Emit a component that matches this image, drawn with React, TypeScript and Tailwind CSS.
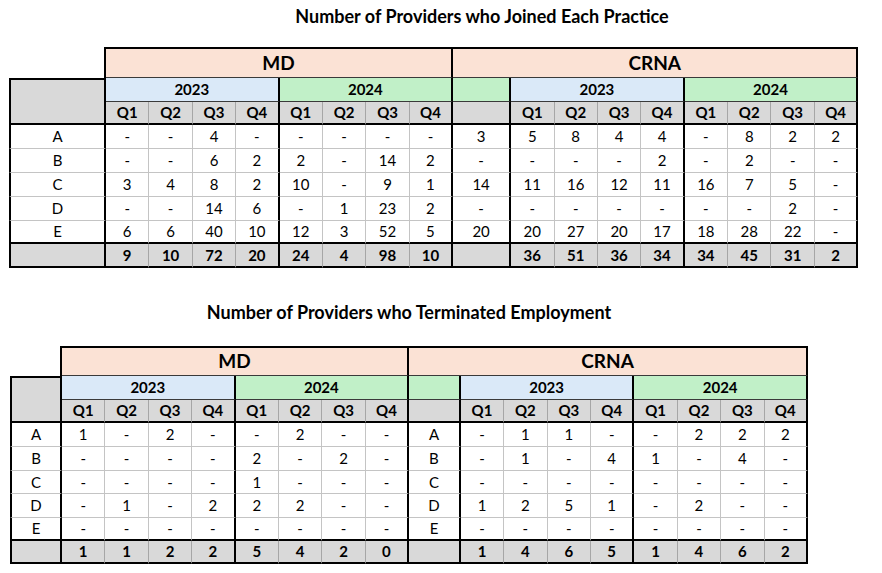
import React from "react";

type Row = { label: string; md: string[]; extra: string; crna: string[] };

const t1Rows: Row[] = [
  { label: "A", md: ["-", "-", "4", "-", "-", "-", "-", "-"], extra: "3", crna: ["5", "8", "4", "4", "-", "8", "2", "2"] },
  { label: "B", md: ["-", "-", "6", "2", "2", "-", "14", "2"], extra: "-", crna: ["-", "-", "-", "2", "-", "2", "-", "-"] },
  { label: "C", md: ["3", "4", "8", "2", "10", "-", "9", "1"], extra: "14", crna: ["11", "16", "12", "11", "16", "7", "5", "-"] },
  { label: "D", md: ["-", "-", "14", "6", "-", "1", "23", "2"], extra: "-", crna: ["-", "-", "-", "-", "-", "-", "2", "-"] },
  { label: "E", md: ["6", "6", "40", "10", "12", "3", "52", "5"], extra: "20", crna: ["20", "27", "20", "17", "18", "28", "22", "-"] },
];
const t1Tot = { md: ["9", "10", "72", "20", "24", "4", "98", "10"], crna: ["36", "51", "36", "34", "34", "45", "31", "2"] };

const d = "-";
const t2Rows: Row[] = [
  { label: "A", md: ["1", d, "2", d, d, "2", d, d], extra: "A", crna: [d, "1", "1", d, d, "2", "2", "2"] },
  { label: "B", md: [d, d, d, d, "2", d, "2", d], extra: "B", crna: [d, "1", d, "4", "1", d, "4", d] },
  { label: "C", md: [d, d, d, d, "1", d, d, d], extra: "C", crna: [d, d, d, d, d, d, d, d] },
  { label: "D", md: [d, "1", d, "2", "2", "2", d, d], extra: "D", crna: ["1", "2", "5", "1", d, "2", d, d] },
  { label: "E", md: [d, d, d, d, d, d, d, d], extra: "E", crna: [d, d, d, d, d, d, d, d] },
];
const t2Tot = { md: ["1", "1", "2", "2", "5", "4", "2", "0"], crna: ["1", "4", "6", "5", "1", "4", "6", "2"] };

const THICK = new Set([0, 4, 8, 9, 13, 17]);

function rb(c: number, header = false) {
  if (THICK.has(c)) return "border-r-2 border-r-black";
  return header ? "border-r border-r-[#a6a6a6]" : "border-r border-r-[#c4c4c4]";
}

const Q = ["Q1", "Q2", "Q3", "Q4", "Q1", "Q2", "Q3", "Q4"];

function Table({
  rows,
  tot,
  colsClass,
  rowsClass,
}: {
  rows: Row[];
  tot: { md: string[]; crna: string[] };
  colsClass: string;
  rowsClass: string;
}) {
  const cells: React.ReactNode[] = [];
  let k = 0;
  const base = "flex items-center justify-center text-black";
  // Row 1
  cells.push(<div key={k++} className="border-r-2 border-r-black" />);
  cells.push(
    <div key={k++} className={`${base} col-span-8 bg-[#fbe2d5] border-t-2 border-t-black border-r-2 border-r-black border-b border-b-[#3a3a3a] text-[19px] font-bold`}>
      MD
    </div>
  );
  cells.push(
    <div key={k++} className={`${base} col-span-9 bg-[#fbe2d5] border-t-2 border-t-black border-r-2 border-r-black border-b border-b-[#3a3a3a] text-[19px] font-bold`}>
      CRNA
    </div>
  );
  // Row 2
  cells.push(
    <div key={k++} className="row-span-2 bg-[#d9d9d9] border-l-2 border-l-black border-t-2 border-t-black border-r-2 border-r-black border-b-2 border-b-black" />
  );
  const yr = "text-[15px] font-bold border-b border-b-[#3a3a3a]";
  cells.push(<div key={k++} className={`${base} ${yr} col-span-4 bg-[#dae9f8] border-r-2 border-r-black`}>2023</div>);
  cells.push(<div key={k++} className={`${base} ${yr} col-span-4 bg-[#c1f0c8] border-r-2 border-r-black`}>2024</div>);
  cells.push(<div key={k++} className={`${base} ${yr} bg-[#c1f0c8] border-r-2 border-r-black`} />);
  cells.push(<div key={k++} className={`${base} ${yr} col-span-4 bg-[#dae9f8] border-r-2 border-r-black`}>2023</div>);
  cells.push(<div key={k++} className={`${base} ${yr} col-span-4 bg-[#c1f0c8] border-r-2 border-r-black`}>2024</div>);
  // Row 3
  const qc = "text-[15px] font-bold bg-[#d9d9d9] border-b-2 border-b-black";
  Q.forEach((q, i) => {
    cells.push(<div key={k++} className={`${base} ${qc} ${rb(i + 1, true)}`}>{q}</div>);
  });
  cells.push(<div key={k++} className={`${base} ${qc} ${rb(9, true)}`} />);
  Q.forEach((q, i) => {
    cells.push(<div key={k++} className={`${base} ${qc} ${rb(i + 10, true)}`}>{q}</div>);
  });
  // Data rows
  rows.forEach((r, ri) => {
    const last = ri === rows.length - 1;
    const bb = last ? "border-b-2 border-b-black" : "border-b border-b-[#c4c4c4]";
    const dc = `${base} text-[15px] bg-white ${bb}`;
    cells.push(<div key={k++} className={`${dc} border-l-2 border-l-black ${rb(0)}`}>{r.label}</div>);
    r.md.forEach((v, i) => cells.push(<div key={k++} className={`${dc} ${rb(i + 1)}`}>{v}</div>));
    cells.push(<div key={k++} className={`${dc} ${rb(9)}`}>{r.extra}</div>);
    r.crna.forEach((v, i) => cells.push(<div key={k++} className={`${dc} ${rb(i + 10)}`}>{v}</div>));
  });
  // Total row
  const tc = `${base} text-[15px] font-bold bg-[#d9d9d9] border-b-2 border-b-black`;
  cells.push(<div key={k++} className={`${tc} border-l-2 border-l-black ${rb(0, true)}`} />);
  tot.md.forEach((v, i) => cells.push(<div key={k++} className={`${tc} ${rb(i + 1, true)}`}>{v}</div>));
  cells.push(<div key={k++} className={`${tc} ${rb(9, true)}`} />);
  tot.crna.forEach((v, i) => cells.push(<div key={k++} className={`${tc} ${rb(i + 10, true)}`}>{v}</div>));

  return <div className={`grid ${colsClass} ${rowsClass}`}>{cells}</div>;
}

export default function App() {
  return (
    <div
      className="w-[882px] h-[573px] bg-white overflow-hidden"
      style={{ fontFamily: "Lato, 'Open Sans', sans-serif" }}
    >
      <div className="ml-[106px] w-[752px] h-[32px] flex items-center justify-center text-[18px] font-bold text-black">
        Number of Providers who Joined Each Practice
      </div>
      <div className="ml-[9px] mt-[15px]">
        <Table
          rows={t1Rows}
          tot={t1Tot}
          colsClass="grid-cols-[97px_repeat(8,43.4px)_58px_repeat(8,43.4px)]"
          rowsClass="grid-rows-[31px_23.5px_23.5px_24px_24px_24px_24px_23px_23.5px]"
        />
      </div>
      <div className="ml-[10px] w-[798px] h-[32px] mt-[29px] flex items-center justify-center text-[18px] font-bold text-black">
        Number of Providers who Terminated Employment
      </div>
      <div className="ml-[10px] mt-[17px]">
        <Table
          rows={t2Rows}
          tot={t2Tot}
          colsClass="grid-cols-[52px_repeat(8,43.4px)_51.7px_repeat(8,43.4px)]"
          rowsClass="grid-rows-[30.5px_23.5px_23px_24.5px_23.5px_23.5px_23.5px_23.5px_22.5px]"
        />
      </div>
    </div>
  );
}
